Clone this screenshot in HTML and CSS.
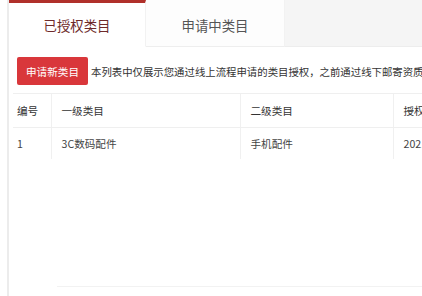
FILE: index.html
```html
<!DOCTYPE html>
<html lang="zh-CN">
<head>
<meta charset="utf-8">
<link rel="stylesheet" href="styles.css">
</head>
<body>
<div class="page">
  <div class="tabs">
    <div class="tab active">已授权类目</div>
    <div class="tab">申请中类目</div>
    <div class="tab-rest"></div>
  </div>
  <div class="panel">
    <div class="toolbar">
      <button class="btn">申请新类目</button>
      <span class="note">本列表中仅展示您通过线上流程申请的类目授权，之前通过线下邮寄资质的类目授权不在此列表中展示</span>
    </div>
    <table class="grid">
      <colgroup>
        <col class="c1"><col class="c2"><col class="c3"><col class="c4">
      </colgroup>
      <thead>
        <tr><th>编号</th><th>一级类目</th><th>二级类目</th><th>授权时间</th></tr>
      </thead>
      <tbody>
        <tr><td>1</td><td>3C数码配件</td><td>手机配件</td><td>2021-03-15</td></tr>
      </tbody>
    </table>
    <div class="foot"></div>
  </div>
</div>
</body>
</html>
```
FILE: styles.css
```css
* { box-sizing: border-box; }
html, body { margin: 0; padding: 0; }
body {
  width: 422px;
  height: 296px;
  overflow: hidden;
  background: #ffffff;
  font-family: "Noto Sans CJK SC", "Microsoft YaHei", sans-serif;
  color: #333;
}
.page {
  margin-left: 7px;
  width: 560px;
  height: 296px;
  display: flex;
  flex-direction: column;
  border-left: 2px solid #ececec;
}
.tabs {
  display: flex;
  height: 47px;
  flex: none;
}
.tab {
  width: 139px;
  display: flex;
  align-items: center;
  justify-content: center;
  font-size: 13.4px;
  color: #555;
  background: #fdfdfd;
  border-bottom: 1px solid #eeeeee;
  border-right: 1px solid #f2f2f2;
  padding-top: 3px;
}
.tab.active {
  width: 137px;
  background: #ffffff;
  color: #6e2a2a;
  border-top: 3px solid #b0302a;
  border-bottom: 1px solid #ffffff;
  padding-top: 0;
}
.tab-rest {
  flex: 1;
  background: #f5f5f5;
  border-bottom: 1px solid #ededed;
}
.panel {
  flex: 1;
  background: #fff;
  display: flex;
  flex-direction: column;
}
.toolbar {
  display: flex;
  align-items: center;
  gap: 3px;
  padding: 10px 0 0 8px;
  white-space: nowrap;
}
.btn {
  width: 71px;
  height: 28px;
  border: none;
  border-radius: 2px;
  background: #d9373b;
  color: #fff;
  font-family: inherit;
  font-size: 10.6px;
  padding: 0;
}
.note {
  font-size: 10.4px;
  color: #333;
}
.grid {
  margin: 8px 0 0 4px;
  border-collapse: collapse;
  table-layout: fixed;
  width: 520px;
  font-size: 10.6px;
}
.c1 { width: 38px; }
.c2 { width: 189px; }
.c3 { width: 153px; }
.c4 { width: 140px; }
.grid th, .grid td {
  text-align: left;
  font-weight: normal;
  color: #333;
  padding: 0 0 0 10px;
  border-left: 1px solid #f0f0f0;
  white-space: nowrap;
}
.grid th:first-child, .grid td:first-child {
  border-left: none;
  padding-left: 4px;
}
.grid th {
  height: 34px;
  border-top: 1px solid #efefef;
  border-bottom: 1px solid #efefef;
}
.grid td {
  height: 31px;
  color: #444;
}
.foot {
  margin-top: auto;
  margin-left: 48px;
  margin-bottom: 9px;
  border-top: 1px solid #f2f2f2;
  width: 480px;
}
```
